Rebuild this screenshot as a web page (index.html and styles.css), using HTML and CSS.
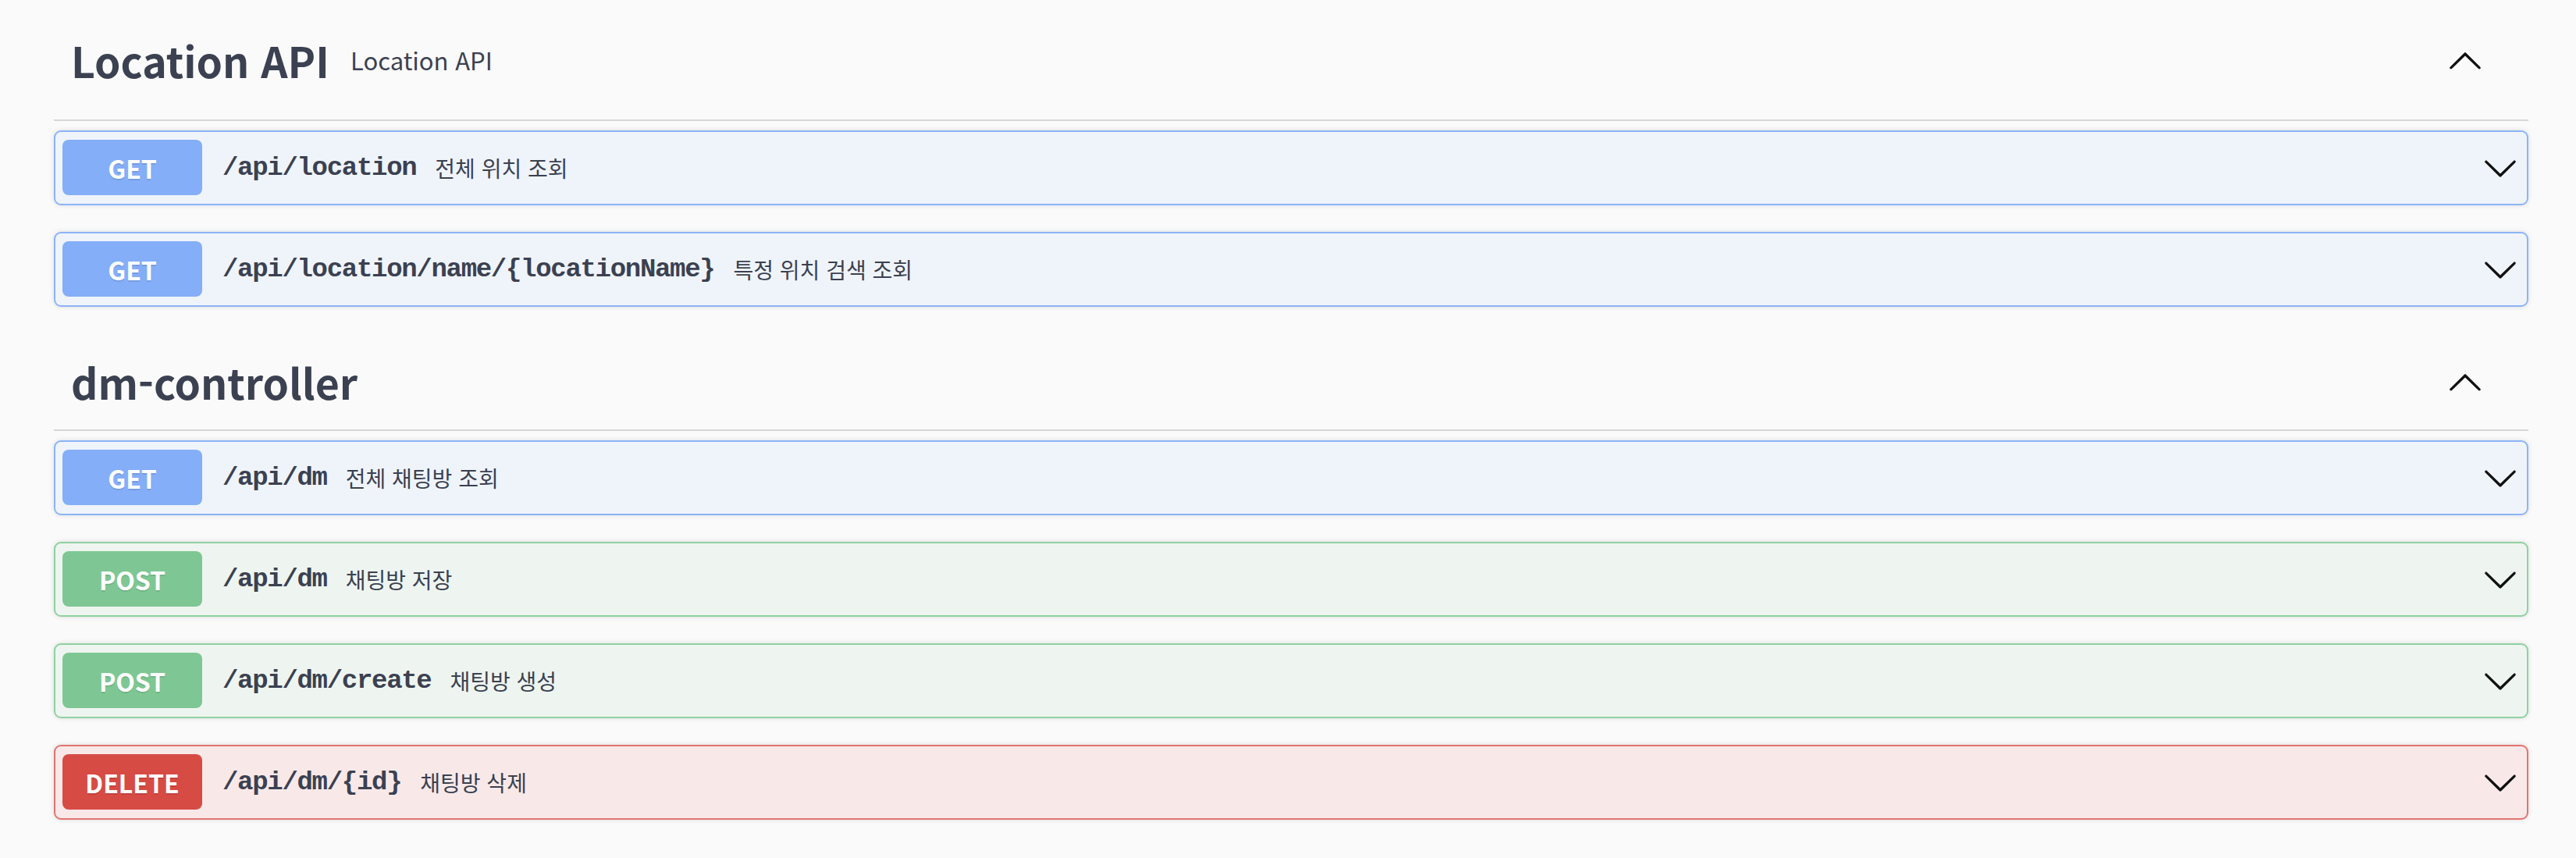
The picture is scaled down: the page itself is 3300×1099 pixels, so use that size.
FILE: index.html
```html
<!DOCTYPE html>
<html lang="ko">
<head>
<meta charset="utf-8">
<title>Swagger UI</title>
<link rel="stylesheet" href="styles.css">
</head>
<body>
<div class="wrapper">
  <section class="tag-section">
    <h3 class="tag tag-first">
      <span class="tag-name">Location API</span>
      <small class="tag-desc">Location API</small>
      <span class="tag-toggle"><svg viewBox="0 0 20 20" class="arrow-up"><path d="M17.418 6.109c.272-.268.709-.268.979 0s.271.701 0 .969l-7.908 7.83c-.27.268-.707.268-.979 0l-7.908-7.830c-.27-.268-.27-.701 0-.969.271-.268.709-.268.979 0L10 13.25l7.418-7.141z"/></svg></span>
    </h3>
    <div class="opblock get">
      <span class="method">GET</span>
      <span class="path">/api/location</span>
      <span class="desc">전체 위치 조회</span>
      <svg viewBox="0 0 20 20" class="arrow"><path d="M17.418 6.109c.272-.268.709-.268.979 0s.271.701 0 .969l-7.908 7.83c-.27.268-.707.268-.979 0l-7.908-7.83c-.27-.268-.27-.701 0-.969.271-.268.709-.268.979 0L10 13.25l7.418-7.141z"/></svg>
    </div>
    <div class="opblock get">
      <span class="method">GET</span>
      <span class="path">/api/location/name/{locationName}</span>
      <span class="desc">특정 위치 검색 조회</span>
      <svg viewBox="0 0 20 20" class="arrow"><path d="M17.418 6.109c.272-.268.709-.268.979 0s.271.701 0 .969l-7.908 7.83c-.27.268-.707.268-.979 0l-7.908-7.83c-.27-.268-.27-.701 0-.969.271-.268.709-.268.979 0L10 13.25l7.418-7.141z"/></svg>
    </div>
  </section>
  <section class="tag-section">
    <h3 class="tag tag-second">
      <span class="tag-name">dm-controller</span>
      <small class="tag-desc"></small>
      <span class="tag-toggle"><svg viewBox="0 0 20 20" class="arrow-up"><path d="M17.418 6.109c.272-.268.709-.268.979 0s.271.701 0 .969l-7.908 7.83c-.27.268-.707.268-.979 0l-7.908-7.83c-.27-.268-.27-.701 0-.969.271-.268.709-.268.979 0L10 13.25l7.418-7.141z"/></svg></span>
    </h3>
    <div class="opblock get">
      <span class="method">GET</span>
      <span class="path">/api/dm</span>
      <span class="desc">전체 채팅방 조회</span>
      <svg viewBox="0 0 20 20" class="arrow"><path d="M17.418 6.109c.272-.268.709-.268.979 0s.271.701 0 .969l-7.908 7.83c-.27.268-.707.268-.979 0l-7.908-7.83c-.27-.268-.27-.701 0-.969.271-.268.709-.268.979 0L10 13.25l7.418-7.141z"/></svg>
    </div>
    <div class="opblock post">
      <span class="method">POST</span>
      <span class="path">/api/dm</span>
      <span class="desc">채팅방 저장</span>
      <svg viewBox="0 0 20 20" class="arrow"><path d="M17.418 6.109c.272-.268.709-.268.979 0s.271.701 0 .969l-7.908 7.83c-.27.268-.707.268-.979 0l-7.908-7.83c-.27-.268-.27-.701 0-.969.271-.268.709-.268.979 0L10 13.25l7.418-7.141z"/></svg>
    </div>
    <div class="opblock post">
      <span class="method">POST</span>
      <span class="path">/api/dm/create</span>
      <span class="desc">채팅방 생성</span>
      <svg viewBox="0 0 20 20" class="arrow"><path d="M17.418 6.109c.272-.268.709-.268.979 0s.271.701 0 .969l-7.908 7.83c-.27.268-.707.268-.979 0l-7.908-7.83c-.27-.268-.27-.701 0-.969.271-.268.709-.268.979 0L10 13.25l7.418-7.141z"/></svg>
    </div>
    <div class="opblock delete">
      <span class="method">DELETE</span>
      <span class="path">/api/dm/{id}</span>
      <span class="desc">채팅방 삭제</span>
      <svg viewBox="0 0 20 20" class="arrow"><path d="M17.418 6.109c.272-.268.709-.268.979 0s.271.701 0 .969l-7.908 7.83c-.27.268-.707.268-.979 0l-7.908-7.83c-.27-.268-.27-.701 0-.969.271-.268.709-.268.979 0L10 13.25l7.418-7.141z"/></svg>
    </div>
  </section>
</div>
</body>
</html>
```

FILE: styles.css
```css
html, body {
  margin: 0;
  padding: 0;
  background: #fafafa;
}
body {
  font-family: "Noto Sans CJK KR", "Noto Sans", sans-serif;
  color: #3b4151;
}
.wrapper {
  padding: 0 61px 0 69px;
}
.tag {
  display: flex;
  align-items: center;
  margin: 0 0 12px;
  padding: 0 58px 0 22px;
  border-bottom: 2px solid #d5d6d8;
  box-sizing: border-box;
  font-weight: 700;
  color: #3b4151;
}
.tag-first {
  height: 155px;
}
.tag-second {
  height: 125px;
}
.tag-name {
  font-size: 53.5px;
  font-weight: 700;
  white-space: nowrap;
}
.tag-desc {
  flex: 1;
  font-size: 31px;
  font-weight: 400;
  padding: 0 27px;
}
.tag-toggle {
  display: flex;
  margin-top: 4px;
}
.arrow-up {
  width: 46px;
  height: 46px;
  transform: rotate(180deg);
  fill: #111;
}
.opblock {
  display: flex;
  align-items: center;
  height: 96px;
  box-sizing: border-box;
  margin: 0 0 34px;
  padding: 0 11px 1px 9px;
  border: 2px solid;
  border-radius: 9px;
  box-shadow: 0 0 6px rgba(0, 0, 0, .12);
}
.method {
  display: flex;
  align-items: center;
  justify-content: center;
  width: 179px;
  height: 71px;
  flex: none;
  border-radius: 8px;
  color: #fff;
  font-size: 32px;
  font-weight: 700;
  text-shadow: 0 2px 0 rgba(0, 0, 0, .1);
}
.path {
  margin-left: 26px;
  font-family: "Liberation Mono", "DejaVu Sans Mono", monospace;
  font-size: 34px;
  letter-spacing: -1.3px;
  font-weight: 700;
  color: #3b4151;
  white-space: nowrap;
}
.desc {
  flex: 1;
  margin-left: 24px;
  font-size: 28px;
  color: #3b4151;
  white-space: nowrap;
}
.arrow {
  width: 46px;
  height: 46px;
  flex: none;
  fill: #111;
}
.get {
  background: #eff4fb;
  border-color: #8cb4f6;
}
.get .method {
  background: #84aef7;
}
.post {
  background: #eef5f0;
  border-color: #8fd1a2;
}
.post .method {
  background: #7ec794;
}
.delete {
  background: #f8e9e8;
  border-color: #e17470;
}
.delete .method {
  background: #d74b45;
}
```
